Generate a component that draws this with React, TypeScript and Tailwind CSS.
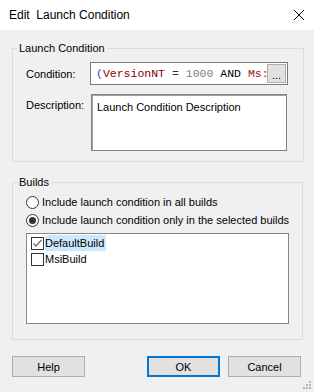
import React, { useState } from 'react';

const Radio = ({ checked, label, onClick }: { checked: boolean; label: string; onClick: () => void }) => (
  <div className="flex items-center h-[18px] cursor-default whitespace-nowrap" onClick={onClick}>
    <span className="w-[13px] h-[13px] shrink-0 rounded-full border border-[#333] bg-white flex items-center justify-center">
      {checked && <span className="w-[7px] h-[7px] rounded-full bg-[#333]" />}
    </span>
    <span className="ml-[3px]">{label}</span>
  </div>
);

const Check = ({ checked }: { checked: boolean }) => (
  <span className="w-[13px] h-[13px] shrink-0 border border-[#333] bg-white flex items-center justify-center">
    {checked && (
      <svg width="11" height="11" viewBox="0 0 11 11">
        <path d="M1.5 5.5 L4 8 L9.5 2" fill="none" stroke="#707070" strokeWidth="1.3" />
      </svg>
    )}
  </span>
);

export default function App() {
  const [mode, setMode] = useState<'all' | 'selected'>('selected');
  const [builds, setBuilds] = useState({ DefaultBuild: true, MsiBuild: false });

  return (
    <div className="relative w-[314px] h-[392px] bg-[#f0f0f0] flex flex-col text-[11px] leading-[16px] text-black font-['Liberation_Sans',sans-serif] overflow-hidden">
      <div className="h-[30px] shrink-0 bg-white flex items-center justify-between pl-[9px] pr-[10px] text-[12px]">
        <span className="whitespace-pre">Edit  Launch Condition</span>
        <svg width="10" height="10" viewBox="0 0 10 10">
          <path d="M0 0 L10 10 M10 0 L0 10" stroke="#000" strokeWidth="1" />
        </svg>
      </div>

      <div className="flex flex-col px-[12px]">
        <fieldset className="mt-[10px] h-[122px] border border-[#dcdcdc] px-0">
          <legend className="ml-[4px] px-[2px] leading-[16px]">Launch Condition</legend>
          <div className="pl-[13px] pr-[15px] pt-[6px]">
            <div className="flex items-center">
              <span className="w-[64px] whitespace-nowrap">Condition:</span>
              <div className="w-[198px] h-[23px] border border-[#7a7a7a] bg-white flex items-center overflow-hidden">
                <span className="flex-1 min-w-0 pl-[5px] whitespace-pre overflow-hidden font-['Liberation_Mono',monospace] text-[11.5px]">
                  <span className="text-[#3b3bd8]">(</span>
                  <span className="text-[#8b0000]">VersionNT</span>
                  <span className="text-[#333]"> = </span>
                  <span className="text-[#808080]">1000</span>
                  <span className="text-black"> AND </span>
                  <span className="text-[#a31515]">Ms:</span>
                </span>
                <button className="w-[19px] h-[19px] mr-[1px] shrink-0 bg-[#e1e1e1] border border-[#adadad] text-[11px] leading-[14px] pt-[3px]">...</button>
              </div>
            </div>
            <div className="flex items-start mt-[9px]">
              <span className="w-[64px] pt-[3px] whitespace-nowrap">Description:</span>
              <div className="ml-[1px] w-[196px] h-[57px] bg-white border border-[#828282] shadow-[inset_1px_1px_0_#a0a0a0] pl-[5px] pt-[4px]">
                Launch Condition Description
              </div>
            </div>
          </div>
        </fieldset>

        <fieldset className="mt-[12px] h-[166px] border border-[#dcdcdc] px-0">
          <legend className="ml-[4px] px-[2px] leading-[16px]">Builds</legend>
          <div className="pl-[13px] pr-[13px] pt-[3px]">
            <Radio checked={mode === 'all'} label="Include launch condition in all builds" onClick={() => setMode('all')} />
            <Radio checked={mode === 'selected'} label="Include launch condition only in the selected builds" onClick={() => setMode('selected')} />
            <div className="mt-[4px] w-[263px] h-[91px] bg-white border border-[#828790] pl-[4px] pt-[1px]">
              {(Object.keys(builds) as (keyof typeof builds)[]).map((name, i) => (
                <div
                  key={name}
                  className="flex items-center h-[16px]"
                  onClick={() => setBuilds({ ...builds, [name]: !builds[name] })}
                >
                  <Check checked={builds[name]} />
                  <span className={i === 0 ? 'ml-px pr-[2px] bg-[#cce8ff]' : 'ml-px pr-[2px]'}>{name}</span>
                </div>
              ))}
            </div>
          </div>
        </fieldset>

        <div className="mt-[16px] flex">
          <button className="w-[73px] h-[21px] bg-[#e1e1e1] border border-[#adadad]">Help</button>
          <button className="ml-auto w-[73px] h-[21px] bg-[#e1e1e1] border-2 border-[#0078d7]">OK</button>
          <button className="ml-[8px] mr-[1px] w-[73px] h-[21px] bg-[#e1e1e1] border border-[#adadad]">Cancel</button>
        </div>
      </div>

      <svg className="absolute right-[3px] bottom-[3px]" width="8" height="8" viewBox="0 0 8 8">
        <rect x="6" y="0" width="2" height="2" fill="#b4b4b4" />
        <rect x="3" y="3" width="2" height="2" fill="#b4b4b4" />
        <rect x="6" y="3" width="2" height="2" fill="#b4b4b4" />
        <rect x="0" y="6" width="2" height="2" fill="#b4b4b4" />
        <rect x="3" y="6" width="2" height="2" fill="#b4b4b4" />
        <rect x="6" y="6" width="2" height="2" fill="#b4b4b4" />
      </svg>
    </div>
  );
}
